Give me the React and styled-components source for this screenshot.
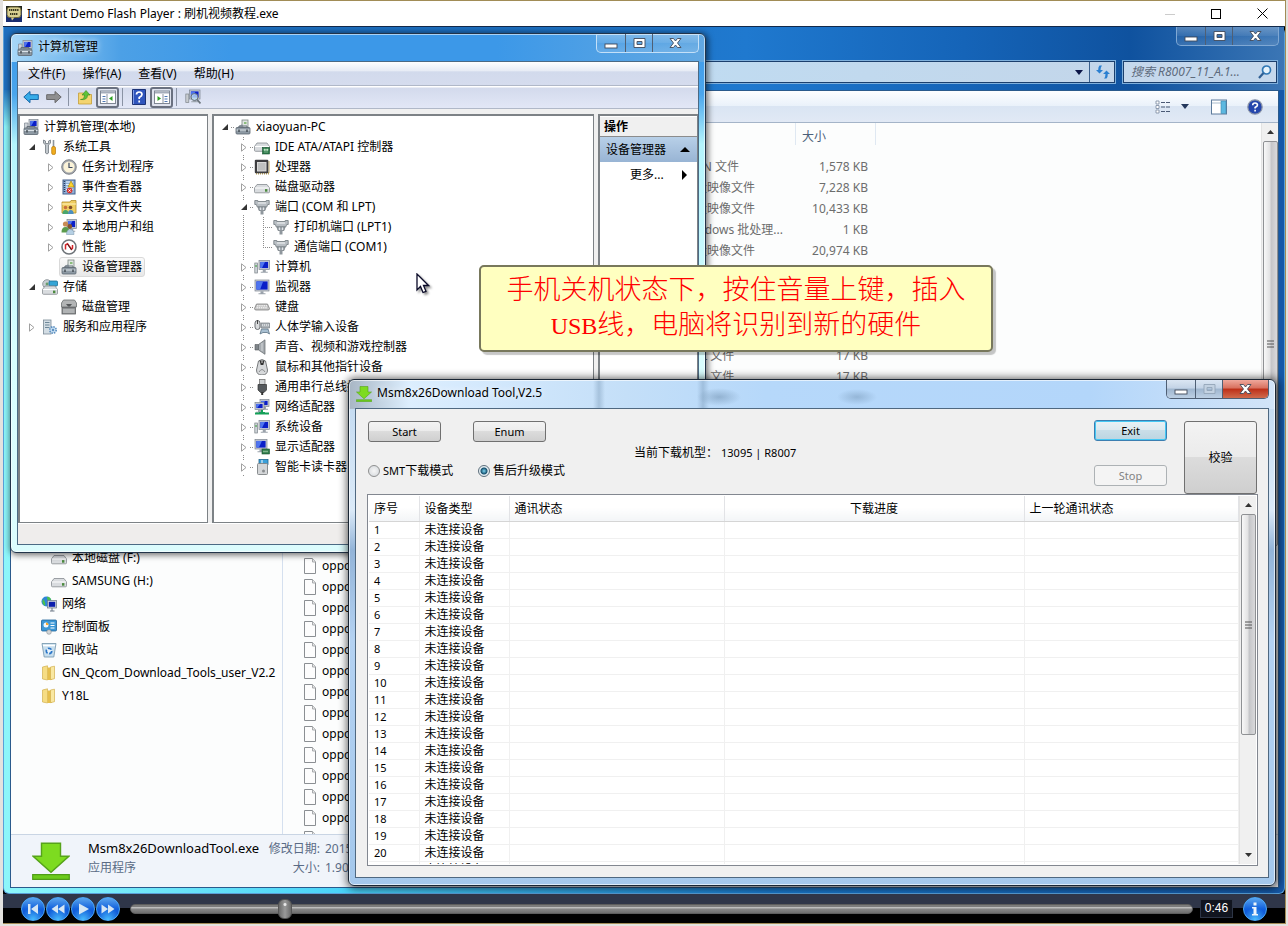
import React from "react";
import styled, { createGlobalStyle, css } from "styled-components";

const Global = createGlobalStyle`
  * { box-sizing: border-box; }
  body { margin: 0; background: #e4e2df; font: 12px/20px "Noto Sans", "Noto Sans CJK SC", sans-serif; color: #000; }
  button, input { font: inherit; margin: 0; }
  ul { list-style: none; margin: 0; padding: 0; }
  svg { display: block; flex: none; }
`;

/* ---------- icons ---------- */

const Screen = ({ x = 5, y = 1, w = 10, h = 8 }) => (
  <g>
    <rect x={x} y={y} width={w} height={h} fill="#c9ced6" stroke="#7d8590" strokeWidth=".7" />
    <rect x={x + 1.4} y={y + 1.4} width={w - 2.8} height={h - 2.8} fill="#0a1fc8" />
    <path d={`M${x + 1.4} ${y + 1.4}h${(w - 2.8) * 0.6}l-3 ${h - 2.8}h-${Math.max(0, (w - 2.8) * 0.6 - 3)}z`} fill="#4d74ef" />
    <path d={`M${x + w / 2 - 1.5} ${y + h + 0.3}h3v2h2v1h-7v-1h2z`} fill="#9aa2ab" />
  </g>
);
const Toolbox = ({ y = 8 }) => (
  <g>
    <path d={`M4 ${y + 2}v-2.5h8V${y + 2}`} fill="none" stroke="#66707a" />
    <rect x="1" y={y + 1} width="14" height="6.5" rx="1" fill="#8e9aa4" stroke="#5b656e" strokeWidth=".8" />
    <path d={`M1.5 ${y + 3.5}h13`} stroke="#dce3e8" />
    <path d={`M4 ${y + 3}v2.4M12 ${y + 3}v2.4`} stroke="#3f484f" strokeWidth="1.4" />
  </g>
);
const Drive = ({ y = 7 }) => (
  <g>
    <path d={`M3 ${y}h10l2.5 3.5v3.8q0 1-1 1h-13q-1 0-1-1v-3.8z`} fill="#d9dcdf" stroke="#868b90" strokeWidth=".8" />
    <path d={`M1 ${y + 3.5}h14`} stroke="#fff" />
    <rect x="11" y={y + 4.6} width="2.4" height="2.6" fill="#4c8a3f" />
  </g>
);

const Icons = {
  manager: <g><Screen x={6} y={0.5} w={9} h={8} /><path d="M1.5 4h3.5v7h-3.5z" fill="#cfd4d9" stroke="#7d8590" strokeWidth=".7" /><Toolbox y={8} /></g>,
  tools: <g><path d="M1.500 1v3l2 2v8q1.500 2 3 0V6l2-2V1l-2 1v2.500h-3V2z" fill="#c3c9ce" stroke="#717980" strokeWidth=".8" /><path d="M11.500 1v7" stroke="#8d959b" strokeWidth="1.600" /><rect x="9.700" y="7.500" width="3.800" height="8" rx="1.500" fill="#f0ac1e" stroke="#b87a08" strokeWidth=".7" /></g>,
  clock: <g><circle cx="8" cy="8" r="7.300" fill="#a4a8ae" stroke="#6d7176" strokeWidth=".8" /><circle cx="8" cy="8" r="5.600" fill="#fbf3d8" /><path d="M8 3.800V8.500h3.500" fill="none" stroke="#3c4a63" strokeWidth="1.200" /></g>,
  event: <g><rect x="2" y="1" width="12" height="14" fill="#8fb0d8" stroke="#46618c" /><path d="M5 3h7M5 5.500h7M5 8h7M5 10.500h7" stroke="#e8f1fb" /><path d="M3.500 2v12" stroke="#2c3e5e" strokeDasharray="1 1" strokeWidth="1.500" /><path d="M10 2l3.200 6H7z" fill="#ffd42e" stroke="#a37a00" strokeWidth=".6" /><circle cx="8.600" cy="11.500" r="2.800" fill="#d8322c" /><path d="M7.500 10.400l2.200 2.200m0-2.200l-2.200 2.200" stroke="#fff" /></g>,
  share: <g><path d="M1 3h8l1-1.500h5V14H1z" fill="#f0cd60" stroke="#b18e2a" strokeWidth=".8" /><path d="M1 5h14" stroke="#fff3bd" /><circle cx="4.500" cy="8.500" r="1.800" fill="#c8703a" /><circle cx="9.500" cy="8.500" r="1.800" fill="#7a4b2b" /><path d="M1.500 15q0-4 3-4t3 4z" fill="#4aa66e" /><path d="M7 15q0-4 2.800-4t2.800 4z" fill="#4d8fc0" /></g>,
  users: <g><Screen x={6} y={0.500} w={9.500} h={9} /><circle cx="4.500" cy="5" r="2.600" fill="#c88b55" /><circle cx="8.800" cy="7.500" r="2.400" fill="#83552f" /><path d="M.5 13.500q0-5.500 4-5.500t4 5.500z" fill="#5b9b4c" /><path d="M5.500 15.500q0-5 3.800-5t3.700 5z" fill="#b6d0e4" stroke="#7695ad" strokeWidth=".5" /></g>,
  perf: <g><circle cx="8" cy="8" r="7" fill="#fff" stroke="#70757a" strokeWidth="1.600" /><path d="M4.500 10.500V6l2-1.200 4 5.500 1-1V6" fill="none" stroke="#d3262a" strokeWidth="1.500" /><path d="M6.500 5l4 6" stroke="#222" strokeWidth=".8" /></g>,
  device: <g><rect x="7" y="1" width="6" height="8" fill="#dfe6e2" stroke="#7c8682" strokeWidth=".8" /><path d="M9 3h2.500v2H9z" fill="#8bbd7c" /><path d="M3 8l4-3 2 4z" fill="#98a3ac" /><Toolbox y={7.500} /></g>,
  storage: <g><circle cx="5" cy="5" r="4.300" fill="#c9cfd4" stroke="#7e868c" strokeWidth=".8" /><circle cx="5" cy="5" r="1.400" fill="#6b9e6d" /><rect x="7" y="2" width="8.500" height="5" rx="1" fill="#35a5d6" stroke="#1d6f95" strokeWidth=".8" /><Drive y={7} /></g>,
  diskmgmt: <g><path d="M2.500 1h11l2 3v4h-15v-4z" fill="#b3b5b6" stroke="#6b6e70" strokeWidth=".8" /><path d="M5 5h6l-2 2.500H7z" fill="#55585a" /><rect x="1" y="8.500" width="13.500" height="6.500" fill="#8c8f91" stroke="#5c5f61" strokeWidth=".8" /><path d="M2 11h11.500M2 13h11.500" stroke="#d5d7d8" /></g>,
  services: <g><rect x="1.500" y="1" width="7.500" height="14" fill="#d3dde4" stroke="#7b8a96" strokeWidth=".8" /><path d="M3 3.500h4.500M3 6h4.500M3 8.500h4.500" stroke="#6d8798" /><circle cx="11" cy="11" r="3.200" fill="#c7dff2" stroke="#5c8fc0" strokeWidth="1.600" strokeDasharray="1.500 1" /><circle cx="11" cy="11" r="1.200" fill="#5c8fc0" /></g>,
  ide: <g><Drive y={4} /><rect x="8.500" y="8.500" width="7" height="6.500" fill="#2e7b4a" stroke="#175330" strokeWidth=".6" /><path d="M10 10h1.500v1.500H10zM12.500 10H14v1.500h-1.500zM10 13h4" fill="#bfe3c4" stroke="#bfe3c4" strokeWidth=".5" /></g>,
  cpu: <g><path d="M2 14.500h13V2" fill="none" stroke="#b49b55" strokeWidth="1.800" strokeDasharray="1 1" /><rect x=".8" y=".8" width="13.500" height="13.500" rx="1" fill="#3d3d40" /><rect x="3.500" y="3.500" width="8.500" height="8.500" fill="#bfc0c0" stroke="#dadada" /></g>,
  disk: <Drive y={5.500} />,
  port: <g><path d="M.8 1.500h3v1h8.400v-1h3v4h-1.500l-1 2.500H3.300l-1-2.500H.8z" fill="#b9bfc4" stroke="#70787e" strokeWidth=".8" /><path d="M4 4h8" stroke="#f4f6f7" /><path d="M4 8h8l-1 3.500H5z" fill="#a2a9af" stroke="#70787e" strokeWidth=".7" /><path d="M6.500 8.500v2.500M9.500 8.500v2.500" stroke="#e2e6e9" /><path d="M6.500 11.500h3v4h-3z" fill="#8f979d" /></g>,
  computer: <g><Screen x={5} y={1.500} w={10.500} h={9} /><rect x=".8" y="4" width="2.800" height="10" fill="#cdd2d6" stroke="#7c848a" strokeWidth=".7" /><path d="M1.300 7h1.500" stroke="#43a443" strokeWidth="1.500" /></g>,
  monitor: <Screen x={1} y={1} w={14} h={11} />,
  keyboard: <g><path d="M2.500 5h11l2 4.500q0 1.500-1.500 1.500H2Q.5 11 .5 9.500z" fill="#c4c4c4" stroke="#808080" strokeWidth=".8" /><path d="M3 6.800h10M2.500 8.800h11" stroke="#fff" strokeDasharray="1.400 .8" /></g>,
  hid: <g><rect x="1" y="1.500" width="5" height="9" rx="2.500" fill="#d8dadc" stroke="#6a6e72" /><path d="M3.500 1v4" stroke="#444" /><path d="M7 4h8.500v5H7z" fill="#aeb4b9" stroke="#767d83" strokeWidth=".7" /><path d="M8 6h7" stroke="#fff" strokeDasharray="1 1" /><path d="M6 15l1.500-5h6.500l1.500 5-2.500-1.500H9z" fill="#a9c0d2" stroke="#5d7385" strokeWidth=".8" /></g>,
  sound: <g><path d="M1 5.500h3.500V11H1z" fill="#7f858a" stroke="#55595c" strokeWidth=".6" /><path d="M4.500 5.500L11 .8v14.500L4.500 11z" fill="#a6abb0" stroke="#5f6468" strokeWidth=".7" /><path d="M8 4v8" stroke="#d4d8da" /></g>,
  mouse: <g><path d="M4.500 2q3.500-3 7 0l2 9q0 5-5.500 5t-5.500-5z" fill="#d7d9db" stroke="#6b6e70" strokeWidth=".9" /><path d="M5.500 1.500l1.200 4.500h2.600l1.200-4.500z" fill="#333" /><path d="M8 1.500v2.500" stroke="#ddd" /><path d="M5 13q3-5 6 0" fill="none" stroke="#8b8e90" /></g>,
  usb: <g><rect x="5.500" y=".5" width="5.500" height="5" fill="#d0d3d5" stroke="#777" strokeWidth=".8" /><path d="M4 5.500h8.500V11l-2.500 2.500h-3.500L4 11z" fill="#55595d" stroke="#333" strokeWidth=".7" /><path d="M8.200 13v3" stroke="#333" strokeWidth="2" /></g>,
  netadapter: <g><Screen x={6} y={0.500} w={9} h={7} /><Screen x={1} y={3.500} w={9} h={7} /><path d="M1 14.500h14M5 14h6M8 11v3" stroke="#14a058" strokeWidth="2" /></g>,
  display: <g><Screen x={1} y={0.500} w={12} h={9.500} /><rect x="8" y="10" width="7.500" height="5" fill="#2e7b4a" stroke="#174f2e" strokeWidth=".6" /><path d="M9.500 12.500h4.500" stroke="#cfeccf" strokeDasharray="1 1" strokeWidth="1.500" /></g>,
  smartcard: <g><rect x="5" y=".5" width="9" height="5" fill="#3ba0da" stroke="#20648c" strokeWidth=".8" /><path d="M8 1v4" stroke="#fff" /><rect x="3.500" y="4.500" width="10" height="11" rx="1" fill="#d4d6d8" stroke="#7e8285" strokeWidth=".9" /><circle cx="9.500" cy="12" r="1.500" fill="#8a8d90" /></g>,
  network: <g><circle cx="5.500" cy="5.500" r="5" fill="#2f86d8" /><path d="M2 3q3 3 2 7Q0 7 2 3zM6 .8q4 0 4 3.500L6.500 4z" fill="#4cc14d" /><rect x="6.500" y="4.500" width="9" height="7.500" fill="#d3d7dc" stroke="#6a7785" strokeWidth=".7" /><rect x="7.800" y="5.800" width="6.400" height="5" fill="#0d1fae" /><path d="M11 12v3M9 15h4.500" stroke="#6a7785" /></g>,
  control: <g><rect x=".5" y="1" width="15" height="11" rx="1" fill="#3b97d6" stroke="#1f6298" strokeWidth=".8" /><circle cx="5" cy="6" r="2.500" fill="#f1f7fb" /><path d="M5 6V3.500A2.500 2.500 0 0 1 7.500 6z" fill="#f5a52a" /><path d="M9.500 4h4M9.500 6.500h4M9.500 9h4" stroke="#fff" /><circle cx="8" cy="13" r="2.300" fill="#d3d7d9" stroke="#878c90" strokeWidth=".6" /></g>,
  recycle: <g><path d="M1 1.500h14L12.800 15H3.200z" fill="#c8dfee" stroke="#7e9db2" strokeWidth=".9" /><path d="M2 3.500h12" stroke="#fff" strokeWidth="1.500" /><circle cx="8" cy="9" r="2.700" fill="#eaf4fb" stroke="#2c77c8" strokeWidth="1.700" strokeDasharray="4 1.600" /></g>,
  folder: <g><path d="M1.500 2l5-1.200V15l-5-1z" fill="#f6dd84" stroke="#d2b04f" strokeWidth=".7" /><path d="M6.500 2.500H11V15H6.500z" fill="#e6bf4c" /><path d="M9.500 2l4-.8v12.500l-4 1z" fill="#f9e8a2" stroke="#d2b04f" strokeWidth=".7" /></g>,
  file: <g><path d="M2.500.5h8l3 3.500v11.500h-11z" fill="#fdfdfd" stroke="#8b8f93" /><path d="M10.500.5v3.500h3" fill="#e6e6e6" stroke="#a8abad" /></g>,
  download: <g><path d="M4 .5h8v5.500h3.500L8 12.800.5 6H4z" fill="#7ddb20" stroke="#56a31a" strokeWidth=".6" /><path d="M.3 13.700h15.400v2H.3z" fill="#6ccb1c" stroke="#4f9c17" strokeWidth=".5" /></g>,
  back: <path d="M.8 8L7 2.500V5.700h8.300v4.800H7v3.200z" fill="#37ace8" stroke="#1767a8" />,
  forward: <path d="M15.200 8L9 2.500V5.700H.7v4.800H9v3.200z" fill="#8f8f90" stroke="#69696b" />,
  up: <g><path d="M1.500 4h5l1 1.500h7V15h-13z" fill="#f3d470" stroke="#c49e38" strokeWidth=".8" /><path d="M3.500 10.500q4 0 4-4.500H5L9 1.500 13 6h-2.500q0 5.500-7 4.500z" fill="#5fc239" stroke="#338a1a" strokeWidth=".6" /></g>,
  paneLeft: <g><rect x=".5" y="2" width="15" height="12.500" fill="#fff" stroke="#7f8794" /><path d="M1 3.500h14" stroke="#a5adba" strokeWidth="2" /><path d="M2.500 7.500h3M2.500 10h3M2.500 12.500h3" stroke="#4e78b4" /><path d="M7 5v9" stroke="#8b93a0" /><path d="M12.500 7v5L9 9.500z" fill="#2ca022" /></g>,
  paneRight: <g><rect x=".5" y="2" width="15" height="12.500" fill="#fff" stroke="#7f8794" /><path d="M1 3.500h14" stroke="#a5adba" strokeWidth="2" /><path d="M10.500 7.500h3M10.500 10h3M10.500 12.500h3" stroke="#4e78b4" /><path d="M9 5v9" stroke="#8b93a0" /><path d="M3.500 7v5L7 9.500z" fill="#2ca022" /></g>,
  help: <g><path d="M1.500.5h13v15h-13z" fill="#2f55bd" stroke="#1c3377" /><path d="M2.500 1v14" stroke="#7f9be4" /><path d="M5.500 5.500Q5.500 3 8.200 3T11 5.500Q11 7 8.200 8.500V10M8.200 11.500v2" fill="none" stroke="#fff" strokeWidth="1.700" /></g>,
  scan: <g><rect x=".8" y="5" width="3" height="8.500" fill="#c8ccd0" stroke="#7e858b" strokeWidth=".7" /><Screen x={4.500} y={1} w={10.500} h={9} /><circle cx="9.500" cy="8" r="3.500" fill="#bfe0f5" fillOpacity=".8" stroke="#6a737b" /><path d="M12 10.500l3.500 4" stroke="#6a737b" strokeWidth="1.800" /></g>,
  refresh: <g fill="#2a7fd0"><path d="M4.500 1.500H7Q5.500 3 5.500 6H8L4.500 9.500 1 6h2.200Q3.200 2.500 4.500 1.500z" /><path d="M11.500 14.500H9Q10.500 13 10.500 10H8l3.500-3.500L15 10h-2.200Q12.800 13.500 11.500 14.500z" /></g>,
  search: <g><circle cx="9.500" cy="6" r="4" fill="#e5f2fb" stroke="#2f77b4" strokeWidth="1.700" /><path d="M6.500 9L2 14" stroke="#2f5f94" strokeWidth="2.200" /></g>,
  views: <g><path d="M1 2h3v3H1zM1 6.500h3v3H1zM1 11h3v3H1z" fill="#fff" stroke="#7888a0" strokeWidth=".8" /><path d="M6 3.500h9M6 8h9M6 12.500h9" stroke="#4b5a75" strokeDasharray="4 1" /></g>,
  preview: <g><rect x=".5" y="1" width="15" height="14" fill="#fff" stroke="#5c7b9c" /><path d="M1 4h9" stroke="#a9bccd" /><rect x="10" y="2" width="5" height="12.500" fill="#5cb8e0" stroke="#3c86ad" strokeWidth=".6" /></g>,
  helpRound: <g><circle cx="8" cy="8" r="7.200" fill="#2446ac" stroke="#8a94a8" strokeWidth="1.200" /><path d="M5.700 6.200Q5.700 4 8.100 4t2.400 2.100Q10.500 7.300 8.100 8.500v1M8.100 10.700v1.700" fill="none" stroke="#fff" strokeWidth="1.600" /></g>,
  app: <g><rect width="16" height="16" fill="#182c70" /><path d="M0 0h16v5H0z" fill="#20241c" /><rect x="1" y="1" width="14" height="10.500" rx="3" fill="#d8cf90" stroke="#6d6638" /><path d="M3 4h10M4 8h8" stroke="#3a381f" strokeWidth="2" strokeDasharray="1.300 .6" /><path d="M5 11.500l1 3 2.500-3z" fill="#d8cf90" /></g>,
};
const Icon = ({ name, size = 16 }) => (
  <svg width={size} height={size} viewBox="0 0 16 16" aria-hidden="true">{Icons[name]}</svg>
);

/* ---------- player shell ---------- */

const Page = styled.div`height: 100vh; min-height: 600px; display: flex; padding: 0 2px 2px 3px;`;
const Player = styled.div`
  flex: 1; min-width: 0; display: flex; flex-direction: column; border: 1px solid #a18c56; border-left: 0; background: #000;
`;
const PlayerTitle = styled.header`
  height: 26px; flex: none; display: flex; align-items: center; gap: 5px; padding-left: 3px; background: #fff; border-bottom: 1px solid #12294a;
`;
const PlayerButtons = styled.div`display: flex;`;
const Grow = styled.span`flex: 1; min-width: 0;`;
const PlainButton = styled.button`
  width: 46px; height: 25px; padding: 0; border: 0; background: none; display: grid; place-items: center;
`;
const Stage = styled.main`flex: 1; min-height: 0; position: relative; display: flex; overflow: hidden;`;

const PlayerBar = styled.footer`
  height: 29px; flex: none; display: flex; align-items: center; gap: 1px; padding: 0 18px; background: linear-gradient(#2f3649 50%, #000 50%);
`;
const Round = styled.button`
  width: 24px; height: 24px; padding: 0; border: 1px solid #4aa8f8; border-radius: 50%; display: grid; place-items: center;
  background: radial-gradient(circle at 50% 100%, #49c0ff, transparent 50%), linear-gradient(#5aa5ee, #1160dc 50%, #0c4cd0);
`;
const Seek = styled.input`
  appearance: none; flex: 1; min-width: 0; height: 20px; margin: 0 6px 0 9px; background: none;
  &::-webkit-slider-runnable-track {
    height: 10px; border-radius: 5px; border: 1px solid #5d5d5d; background: linear-gradient(#7c7c7c 20%, #c0c0c0 30%, #858585 55%, #6d6d6d);
  }
  &::-webkit-slider-thumb {
    appearance: none; width: 14px; height: 20px; margin-top: -6px; border-radius: 6px; border: 1px solid #555;
    background: radial-gradient(circle at 50% 25%, #e8e8e8 1px, transparent 2px), linear-gradient(90deg, #6a6a6a, #999, #6a6a6a);
  }
`;
const Time = styled.output`
  width: 33px; height: 19px; margin-right: 9px; border: 1px solid #2d3546; background: #11151f; color: #fff; text-align: center;
  font: 12px/17px "Liberation Sans", sans-serif;
`;

/* ---------- window parts ---------- */

const CaptionBox = styled.div`
  display: flex; height: 19px; flex: none; border: 1px solid ${(p) => p.$line}; border-top: 0; border-radius: 0 0 5px 5px; overflow: hidden;
`;
const CaptionButton = styled.button`
  width: ${(p) => p.$w}px; padding: 0; border: 0; display: grid; place-items: center;
  background: ${(p) => p.$bg || "linear-gradient(#ffffff40, #ffffff18 50%, #ffffff08 50%, #ffffff20)"};
  & + & { border-left: 1px solid ${(p) => p.$line}; }
`;
const glyphs = {
  min: <rect x="2" y="7" width="12" height="4" />,
  max: <path fillRule="evenodd" d="M3 1.500h11v9H3zM6 4.500v3h5v-3z" />,
  close: <path d="M3 1.500h3.500l2 2.500 2-2.500H14l-3.500 4.500L14 10.500h-3.500l-2-2.500-2 2.500H3L6.500 6z" />,
};
const Captions = ({ line, variant }) => (
  <CaptionBox $line={line}>
    {["min", "max", "close"].map((k, i) => (
      <CaptionButton
        key={k}
        aria-label={k}
        disabled={variant === "dialog" && k === "max"}
        $line={line}
        $w={[28, 27, 46][i]}
        $bg={variant === "dialog" ? (k === "close" ? "linear-gradient(#efa89c, #d8705e 45%, #bd2f18 50%, #d06a4c)" : "linear-gradient(#dbe6f3, #c3d3e6 45%, #9fb6cf 50%, #bdd0e4)") : undefined}
      >
        <svg width="17" height="12" viewBox="0 0 17 12">
          <g fill={variant === "dialog" && k === "max" ? "#c3d2e2" : "#fff"} stroke={variant === "dialog" && k === "max" ? "#93a5b8" : "#414a5a"} strokeWidth=".9">{glyphs[k]}</g>
        </svg>
      </CaptionButton>
    ))}
  </CaptionBox>
);

const Scroll = styled.div`
  width: 17px; flex: none; display: flex; flex-direction: column; align-items: center; background: #f0f0f0; border-left: 1px solid #e3e3e3;
`;
const ScrollArrow = styled.button`
  width: 15px; height: 18px; flex: none; padding: 0; border: 0; background: none; display: grid; place-items: center;
`;
const Thumb = styled.div`
  width: 15px; height: ${(p) => p.$h}px; flex: none; display: grid; place-items: center; border: 1px solid #8f9194; border-radius: 2px;
  background: linear-gradient(90deg, #f8f8f8, #e2e2e3 45%, #c4c5c8 55%, #d9d9db);
`;
const ScrollBar = ({ h }) => (
  <Scroll>
    <ScrollArrow aria-label="up"><svg width="7" height="4"><path d="M3.500 0L7 4H0z" fill="#333" /></svg></ScrollArrow>
    <Thumb $h={h}><svg width="7" height="8"><path d="M0 1h7M0 4h7M0 7h7" stroke="#555" /></svg></Thumb>
    <Grow />
    <ScrollArrow aria-label="down"><svg width="7" height="4"><path d="M3.500 4L7 0H0z" fill="#333" /></svg></ScrollArrow>
  </Scroll>
);

/* ---------- explorer ---------- */

const Explorer = styled.section`
  flex: 1; min-width: 0; display: flex; flex-direction: column; padding: 0 5px 5px 6px; border: 1px solid #5aa0d8; border-top: 0; border-radius: 0 6px 6px 6px;
  background:
    linear-gradient(90deg, transparent 10px, transparent calc(100% - 10px), #1559a8 calc(100% - 7px)),
    linear-gradient(#1c6fc0 0, #1c6fc0 60px, transparent 100px),
    linear-gradient(90deg, #8df6fa, #48d2f8 27%, #1a7bd0 60%, #1559a8);
`;
const ExplorerHead = styled.div`
  margin: 0 -5px 0 -6px; padding: 0 5px 6px 6px; background: linear-gradient(90deg, #1d6fc0 40%, #1f79cf 58%, #1564b8 75%, #0f529f 88%, #3b76b5);
`;
const ExplorerTitle = styled.div`height: 33px; display: flex; justify-content: flex-end;`;
const AddressRow = styled.div`height: 24px; display: flex; gap: 6px; justify-content: flex-end; padding-right: 1px;`;
const fieldBox = css`height: 24px; display: flex; align-items: center; border: 1px solid #7fb0dc; outline: 1px solid #1b3f6d; outline-offset: -2px; background: #c5d8ec;`;
const Address = styled.div`${fieldBox} flex: 1; background: linear-gradient(90deg, #bfdcf2 55%, #c3d6ea);`;
const IconButton = styled.button`
  width: ${(p) => p.$w || 26}px; height: 22px; padding: 0; border: 0; background: none; display: grid; place-items: center;
  ${(p) => p.$line && "border-left: 1px solid #3a5f8c;"}
`;
const SearchField = styled.label`${fieldBox} width: 156px; padding: 0 4px 0 8px;`;
const SearchInput = styled.input`
  flex: 1; min-width: 0; padding: 0; border: 0; background: none; font-style: italic; &::placeholder { color: #5e6b7c; opacity: 1; }
`;
const ExplorerClient = styled.div`flex: 1; min-height: 0; display: flex; flex-direction: column; border: 1px solid #2a5a8c; background: #fcfdfd;`;
const ExplorerTools = styled.div`
  height: 32px; flex: none; display: flex; align-items: center; justify-content: flex-end; padding-right: 10px;
  background: linear-gradient(#fdfeff, #e9f1fa 50%, #dae5f3 50%, #e1e9f5); border-bottom: 1px solid #a4b4c8;
`;
const ExplorerBody = styled.div`flex: 1; min-height: 0; display: flex;`;
const Nav = styled.nav`width: 272px; flex: none; padding-top: 423px; border-right: 1px solid #d5e0ef; overflow: hidden;`;
const NavLink = styled.a`
  height: 23px; display: flex; align-items: center; gap: 5px; padding-left: ${(p) => (p.$deep ? 40 : 30)}px; color: #000; text-decoration: none; white-space: nowrap;
`;
const Files = styled.div`flex: 1; min-width: 0; overflow: hidden;`;
const FileTable = styled.table`width: 593px; table-layout: fixed; border-collapse: collapse; line-height: 20px; white-space: nowrap;`;
const FileHead = styled.th`
  width: ${(p) => p.$w}px; height: 33px; padding: 4px 6px; vertical-align: top; text-align: left; font-weight: 400; color: #4c607a;
  background: linear-gradient(#dfe8f2, #dfe8f2) right top / 1px 22px no-repeat;
`;
const FileCell = styled.td`
  height: 21px; padding: 0 8px 0 ${(p) => p.$pad || 0}px; color: #6d6d6d; text-align: ${(p) => (p.$right ? "right" : "left")}; overflow: hidden;
`;
const FileName = styled.span`display: flex; align-items: center; gap: 4px; color: #000;`;
const Details = styled.div`
  height: 53px; flex: none; display: flex; padding: 4px 0 0 21px; gap: 18px; border-top: 1px solid #c9d5e4; background: #f0f4fa; color: #5a6b85; line-height: 19px; white-space: nowrap;
`;
const DetailIcon = styled.span`padding-top: 3px;`;
const DetailGrid = styled.dl`
  margin: 0; display: grid; grid-template-columns: 174px 53px auto; column-gap: 5px; align-content: start;
  dt { text-align: right; } dd { margin: 0; }
`;
const DetailTitle = styled.dd`color: #000; font-size: 13px;`;

const rowTypes = [["BIN 文件", "1,578 KB"], ["光盘映像文件", "7,228 KB"], ["光盘映像文件", "10,433 KB"], ["Windows 批处理...", "1 KB"], ["光盘映像文件", "20,974 KB"]];
const fileRows = Array.from({ length: 33 }, (_, i) => {
  if (i < 5) return rowTypes[i];
  if (i === 9 || i === 10) return ["XML 文件", "17 KB"];
  return ["", ""];
});

/* ---------- management console ---------- */

const Console = styled.section`
  position: absolute; left: 7px; top: 6px; width: 696px; height: 520px; display: flex; flex-direction: column; padding: 0 6px 7px;
  border: 1px solid #22344a; border-radius: 6px; box-shadow: inset 0 0 0 1px #ffffff90, 1px 1px 6px 1px #00000090;
  background:
    linear-gradient(90deg, #a8d8f8 0, #4ca0e6 110px, #3c98e8 220px, #3c98e8 70%, #62a8e2) top / 100% 28px no-repeat,
    linear-gradient(#3c98e8, #4aa5ec 60px, #b4f4fc 110px, #d8fdfe 60%, #dcfcfd);
`;
const TitleRow = styled.header`height: ${(p) => p.$h}px; flex: none; display: flex; gap: 5px; padding-left: ${(p) => p.$pad || 0}px;`;
const TitleText = styled.h1`margin: 0; flex: 1; font-size: 12px; font-weight: 400; line-height: 26px; text-shadow: 0 0 6px #fff;`;
const TitleIcon = styled.span`padding-top: 6px;`;
const ConsoleClient = styled.div`flex: 1; min-height: 0; display: flex; flex-direction: column; background: #f0f0f0; border: 1px solid #4c6a84;`;
const MenuBar = styled.nav`
  height: 24px; flex: none; display: flex; align-items: center; gap: 2px; padding-left: 2px;
  background: linear-gradient(#fff, #e6ebf5 40%, #d2daec 42%, #d5dcee); border-bottom: 1px solid #b0b8c8;
`;
const MenuButton = styled.button`height: 20px; padding: 0 7px 0 8px; border: 0; background: none; line-height: 20px;`;
const ToolStrip = styled.div`
  height: 23px; flex: none; display: flex; align-items: center; padding-left: 1px; background: linear-gradient(#fff 1px, #d3daec 2px, #e2e7f6); border-bottom: 1px solid #b0b8c8;
`;
const ToolButton = styled.button`
  width: 23px; height: 21px; padding: 0; display: grid; place-items: center; border: 1px solid transparent; border-radius: 3px; background: none;
  ${(p) => p.$on && "border: 2px solid #6a7180; background: #dfe3ee;"}
`;
const Separator = styled.i`width: 1px; height: 18px; margin: 0 4px 0 3px; background: #8a93a4;`;
const Panels = styled.div`flex: 1; min-height: 0; display: flex; padding: 5px 0 0; gap: 4px;`;
const Panel = styled.div`
  width: ${(p) => p.$w}px; ${(p) => p.$grow && "flex: 1;"} min-width: 0; padding-top: 1px; overflow: hidden; background: #fff; border: 1px solid #7d8286; border-width: 2px 1px 1px 2px;
`;
const StatusBar = styled.div`height: 21px; flex: none; background: #efedec; border-top: 1px solid #fff;`;

const dots = "repeating-linear-gradient(#8c8c8c 0 1px, transparent 1px 2px)";
const TreeList = styled.ul`
  ${(p) => p.$line && css`background: ${dots} ${p.$line}px 0 / 1px ${p.$stop || "100%"} no-repeat;`}
`;
const TreeRow = styled.div`height: 20px; display: flex; align-items: center; padding-left: ${(p) => p.$pad}px; white-space: nowrap;`;
const Expander = styled.button`
  width: 12px; height: 14px; flex: none; padding: 0; border: 0; background: #fff; display: grid; place-items: center;
`;
const Link = styled.i`width: ${(p) => p.$w}px; height: 1px; flex: none; ${(p) => p.$dotted && "background: repeating-linear-gradient(90deg, #8c8c8c 0 1px, transparent 1px 2px);"}`;
const NodeLabel = styled.span`
  display: flex; align-items: center; gap: 5px; height: 20px;
  ${(p) => p.$sel && "margin-left: -2px; padding: 0 2px 0 1px; border: 1px solid #d9d9d9; border-radius: 3px; background: linear-gradient(#fafafa, #e8e8e8);"}
`;
const Node = ({ pad, open, leaf, dotted, linkW = 4, icon, text, sel, children }) => (
  <li>
    <TreeRow $pad={pad}>
      {!leaf && (
        <Expander aria-label={open ? "collapse" : "expand"}>
          <svg width="8" height="9">{open ? <path d="M7 1v6H1z" fill="#333" /> : <path d="M1.500.8v7.400L6 4.500z" fill="#fff" stroke="#a0a0a0" />}</svg>
        </Expander>
      )}
      {linkW > 0 && <Link $w={linkW} $dotted={dotted} />}
      <NodeLabel $sel={sel}><Icon name={icon} />{text}</NodeLabel>
    </TreeRow>
    {children}
  </li>
);

const ActionTitle = styled.h2`margin: 0; height: 20px; padding-left: 4px; font-size: 12px; line-height: 20px; background: #f0f0f0; border-bottom: 1px solid #8c8c8c;`;
const ActionItem = styled.button`
  width: 100%; height: 25px; display: flex; align-items: center; justify-content: space-between; border: 0; padding: 0 7px 0 ${(p) => (p.$head ? 6 : 30)}px;
  background: ${(p) => (p.$head ? "linear-gradient(#b8d0e8, #98b4d4)" : "#fff")};
`;

/* ---------- download tool ---------- */

const Tool = styled.section`
  position: absolute; left: 345px; top: 352px; width: 928px; height: 507px; display: flex; flex-direction: column; padding: 0 6px 7px;
  border: 1px solid #1a2634; border-radius: 6px; box-shadow: inset 0 0 0 1px #ffffffa0, 1px 1px 8px 2px #000000a0;
  background:
    radial-gradient(ellipse 22px 9px at 370px 17px, #5f7f9e70, transparent),
    radial-gradient(ellipse 20px 8px at 508px 17px, #5f7f9e60, transparent),
    linear-gradient(90deg, transparent 244px, #6f8fae60 250px, transparent 256px) top / 100% 29px no-repeat,
    linear-gradient(90deg, transparent 348px, #6f8fae60 354px, transparent 360px) top / 100% 29px no-repeat,
    linear-gradient(90deg, #a8b6c4 0, #dceefe 60px, #d6eafd 110px, #c4dff8 30%, #b6d8fa 45%, #b3d6fa 80%, #d2e4f8) top / 100% 29px no-repeat,
    linear-gradient(#bfd8f0, #dbeaf8 130px, #93b4d8 170px, #b4d2f2 260px, #a4c8ec);
`;
const ToolClient = styled.div`
  flex: 1; min-height: 0; display: flex; flex-direction: column; padding: 0 10px 11px 11px; background: #f0f0f0; border: 1px solid #4f6880;
`;
const Controls = styled.div`display: flex; height: 85px; flex: none; padding: 12px 1px 0;`;
const ButtonGrid = styled.div`width: 266px; display: grid; grid-template-columns: 105px auto; grid-template-rows: 21px 39px; align-content: start;`;
const Push = styled.button`
  width: 73px; height: ${(p) => p.$h || 21}px; padding: 0; border: 1px solid #707070; border-radius: 3px; font-size: 11px; color: #000;
  background: linear-gradient(#f3f3f3, #ebebeb 49%, #dcdcdc 50%, #cfcfcf);
  ${(p) => p.$focus && "border-color: #3c7fb1; box-shadow: inset 0 0 0 1px #45c8f4; background: linear-gradient(#e9f2f6, #dde9ef 49%, #c9dee8 50%, #bcd5e1);"}
  &:disabled { border-color: #adb2b5; background: #f4f4f4; color: #838383; }
`;
const BigPush = styled(Push)`font-size: 12px;`;
const Radio = styled.label`display: flex; align-items: center; gap: 3px; align-self: end; height: 20px; padding-left: ${(p) => p.$pad || 0}px; font-size: 12px; white-space: nowrap;`;
const Small = styled.span`font-size: 11px;`;
const RadioDot = styled.input.attrs({ type: "radio", name: "mode" })`
  appearance: none; width: 12px; height: 12px; border: 1px solid #8e8f8f; border-radius: 50%; background: radial-gradient(#f6f6f6, #d2d6da);
  &:checked { border-color: #5d6f7c; background: radial-gradient(circle, #7fd6f2 0, #16506e 3px, #e6eef2 4px, #e6eef2 5px); }
`;
const Model = styled.p`margin: 0; padding-top: 22px; flex: 1; display: flex; gap: 3px; font-size: 12px; white-space: nowrap;`;
const RightButtons = styled.div`display: flex; flex-direction: column; gap: 24px; margin: -1px 17px 0 0;`;
const ListBox = styled.div`flex: 1; min-height: 0; display: flex; padding: 1px; border: 1px solid #828790; background: #fff; overflow: hidden;`;
const ListView = styled.div`flex: 1; min-width: 0; overflow: hidden;`;
const DeviceTable = styled.table`width: 100%; table-layout: fixed; border-collapse: collapse; font-size: 12px; line-height: 16px; white-space: nowrap;`;
const DeviceHead = styled.th`
  width: ${(p) => p.$w}; height: 25px; padding: 1px 5px 0; text-align: ${(p) => (p.$center ? "center" : "left")}; font-weight: 400;
  border-right: 1px solid #e2e3e6; border-bottom: 1px solid #d5d5d5; background: linear-gradient(#fff 45%, #f3f5f7);
`;
const DeviceCell = styled.td`height: 17px; padding: 0 5px; border-right: 1px solid #f0f0f0; border-bottom: 1px solid #f0f0f0; ${(p) => p.$num && "font-size: 11px;"}`;

/* ---------- overlays ---------- */

const Callout = styled.p`
  position: absolute; left: 476px; top: 238px; width: 514px; height: 87px; margin: 0; padding: 6px 20px 0; text-align: center;
  border: 2px solid #78785c; border-radius: 5px; background: #ffffc0; box-shadow: 3px 3px 1px #00000038;
  color: #f00; font: 300 27px/35px "Liberation Serif", "Noto Sans CJK SC", serif;
`;
const Latin = styled.span`font-size: 24px;`;
const Pointer = styled.svg`position: absolute; left: 413px; top: 246px; filter: drop-shadow(2px 2px 1px #00000070);`;

const down = <svg width="8" height="5"><path d="M0 0h8L4 5z" fill="#0c1648" /></svg>;

const mediaPaths = [
  <path d="M3 3h2.500v10H3zM13 3v10L6 8z" />,
  <path d="M8 3.500v9L1.500 8zM14.500 3.500v9L8 8z" />,
  <path d="M4 2.500v11L14 8z" />,
  <path d="M8 3.500v9L14.500 8zM1.500 3.500v9L8 8z" />,
];

const midNodes = [
  ["ide", "IDE ATA/ATAPI 控制器"], ["cpu", "处理器"], ["disk", "磁盘驱动器"], ["port", "端口 (COM 和 LPT)", true], ["computer", "计算机"], ["monitor", "监视器"],
  ["keyboard", "键盘"], ["hid", "人体学输入设备"], ["sound", "声音、视频和游戏控制器"], ["mouse", "鼠标和其他指针设备"], ["usb", "通用串行总线控制器"],
  ["netadapter", "网络适配器"], ["computer", "系统设备"], ["display", "显示适配器"], ["smartcard", "智能卡读卡器"],
];
const systemTools = [["clock", "任务计划程序"], ["event", "事件查看器"], ["share", "共享文件夹"], ["users", "本地用户和组"], ["perf", "性能"]];

const ExplorerWindow = () => (
  <Explorer>
    <ExplorerHead>
      <ExplorerTitle><Captions line="#7fa8d4" /></ExplorerTitle>
      <AddressRow>
        <Address><Grow /><IconButton $w={20} aria-label="history">{down}</IconButton><IconButton $line aria-label="refresh"><Icon name="refresh" /></IconButton></Address>
        <SearchField><SearchInput aria-label="search" placeholder="搜索 R8007_11_A.1..." /><Icon name="search" /></SearchField>
      </AddressRow>
    </ExplorerHead>
    <ExplorerClient>
      <ExplorerTools>
        <IconButton $w={22} aria-label="views"><Icon name="views" /></IconButton>
        <IconButton $w={22} aria-label="more views"><svg width="8" height="5"><path d="M0 0h8L4 5z" fill="#24385c" /></svg></IconButton>
        <IconButton $w={46} aria-label="preview"><Icon name="preview" /></IconButton>
        <IconButton aria-label="help"><Icon name="helpRound" /></IconButton>
      </ExplorerTools>
      <ExplorerBody>
        <Nav>
          <NavLink href="#f" $deep><Icon name="disk" />本地磁盘 (F:)</NavLink>
          <NavLink href="#h" $deep><Icon name="disk" />SAMSUNG (H:)</NavLink>
          <NavLink href="#net"><Icon name="network" />网络</NavLink>
          <NavLink href="#cp"><Icon name="control" />控制面板</NavLink>
          <NavLink href="#bin"><Icon name="recycle" />回收站</NavLink>
          <NavLink href="#gn"><Icon name="folder" />GN_Qcom_Download_Tools_user_V2.2</NavLink>
          <NavLink href="#y"><Icon name="folder" />Y18L</NavLink>
        </Nav>
        <Files>
          <FileTable>
            <thead><tr><FileHead $w={400} /><FileHead $w={113} /><FileHead $w={80}>大小</FileHead></tr></thead>
            <tbody>
              {fileRows.map(([type, size], i) => (
                <tr key={i}>
                  <FileCell $pad={19}>{i > 18 && <FileName><Icon name="file" />{i < 32 && "oppo"}</FileName>}</FileCell>
                  <FileCell $pad={i === 0 ? 8 : 0}>{type}</FileCell>
                  <FileCell $right>{size}</FileCell>
                </tr>
              ))}
            </tbody>
          </FileTable>
        </Files>
        <ScrollBar h={405} />
      </ExplorerBody>
      <Details>
        <DetailIcon><Icon name="download" size={38} /></DetailIcon>
        <DetailGrid>
          <DetailTitle>Msm8x26DownloadTool.exe</DetailTitle><dt>修改日期:</dt><dd>2015</dd>
          <dd>应用程序</dd><dt>大小:</dt><dd>1.90</dd>
        </DetailGrid>
      </Details>
    </ExplorerClient>
  </Explorer>
);

const ConsoleWindow = () => (
  <Console>
    <TitleRow $h={27}><TitleIcon><Icon name="manager" /></TitleIcon><TitleText>计算机管理</TitleText><Captions line="#c4e0f8" /></TitleRow>
    <ConsoleClient>
      <MenuBar>{["文件(F)", "操作(A)", "查看(V)", "帮助(H)"].map((m) => <MenuButton key={m}>{m}</MenuButton>)}</MenuBar>
      <ToolStrip>
        <ToolButton aria-label="back"><Icon name="back" /></ToolButton>
        <ToolButton aria-label="forward"><Icon name="forward" /></ToolButton>
        <Separator />
        <ToolButton aria-label="up"><Icon name="up" /></ToolButton>
        <ToolButton $on aria-label="tree pane"><Icon name="paneLeft" /></ToolButton>
        <Separator />
        <ToolButton aria-label="help"><Icon name="help" /></ToolButton>
        <ToolButton $on aria-label="action pane"><Icon name="paneRight" /></ToolButton>
        <Separator />
        <ToolButton aria-label="scan"><Icon name="scan" /></ToolButton>
      </ToolStrip>
      <Panels>
        <Panel $w={190}>
          <TreeList>
            <Node pad={3} leaf linkW={0} icon="manager" text="计算机管理(本地)">
              <ul>
                <Node pad={6} open icon="tools" text="系统工具">
                  <ul>
                    {systemTools.map(([icon, text]) => <Node key={text} pad={25} icon={icon} text={text} />)}
                    <Node pad={41} leaf linkW={0} icon="device" text="设备管理器" sel />
                  </ul>
                </Node>
                <Node pad={6} open icon="storage" text="存储"><ul><Node pad={41} leaf linkW={0} icon="diskmgmt" text="磁盘管理" /></ul></Node>
                <Node pad={6} icon="services" text="服务和应用程序" />
              </ul>
            </Node>
          </TreeList>
        </Panel>
        <Panel $grow>
          <TreeList>
            <Node pad={5} open dotted icon="device" text="xiaoyuan-PC">
              <TreeList $line={29} $stop="350px">
                {midNodes.map(([icon, text, open], i) => (
                  <Node key={i} pad={24} dotted open={open} icon={icon} text={text}>
                    {open && (
                      <TreeList $line={49} $stop="30px">
                        <Node pad={49} leaf dotted linkW={10} icon="port" text="打印机端口 (LPT1)" />
                        <Node pad={49} leaf dotted linkW={10} icon="port" text="通信端口 (COM1)" />
                      </TreeList>
                    )}
                  </Node>
                ))}
              </TreeList>
            </Node>
          </TreeList>
        </Panel>
        <Panel $w={100}>
          <ActionTitle>操作</ActionTitle>
          <ActionItem $head>设备管理器<svg width="10" height="5"><path d="M5 0l5 5H0z" /></svg></ActionItem>
          <ActionItem>更多...<svg width="8" height="10"><path d="M0 0l5 5-5 5z" /></svg></ActionItem>
        </Panel>
      </Panels>
      <StatusBar />
    </ConsoleClient>
  </Console>
);

const ToolWindow = () => (
  <Tool>
    <TitleRow $h={28} $pad={1}><TitleIcon><Icon name="download" /></TitleIcon><TitleText>Msm8x26Download Tool,V2.5</TitleText><Captions line="#4f5f74" variant="dialog" /></TitleRow>
    <ToolClient>
      <Controls>
        <ButtonGrid>
          <Push>Start</Push><Push>Enum</Push>
          <Radio><RadioDot /><span><Small>SMT</Small>下载模式</span></Radio>
          <Radio $pad={5}><RadioDot defaultChecked />售后升级模式</Radio>
        </ButtonGrid>
        <Model>当前下载机型： <Small>13095 | R8007</Small></Model>
        <RightButtons><Push $focus>Exit</Push><Push disabled>Stop</Push></RightButtons>
        <BigPush $h={73}>校验</BigPush>
      </Controls>
      <ListBox>
        <ListView>
          <DeviceTable>
            <thead>
              <tr><DeviceHead $w="50px">序号</DeviceHead><DeviceHead $w="90px">设备类型</DeviceHead><DeviceHead $w="215px">通讯状态</DeviceHead><DeviceHead $w="300px" $center>下载进度</DeviceHead><DeviceHead $w="auto">上一轮通讯状态</DeviceHead></tr>
            </thead>
            <tbody>
              {Array.from({ length: 21 }, (_, i) => (
                <tr key={i}><DeviceCell $num>{i + 1}</DeviceCell><DeviceCell>未连接设备</DeviceCell><DeviceCell /><DeviceCell /><DeviceCell /></tr>
              ))}
            </tbody>
          </DeviceTable>
        </ListView>
        <ScrollBar h={221} />
      </ListBox>
    </ToolClient>
  </Tool>
);

export default function App() {
  return (
    <Page>
      <Global />
      <Player>
        <PlayerTitle>
          <Icon name="app" /><span>Instant Demo Flash Player : 刷机视频教程.exe</span><Grow />
          <PlayerButtons>
            <PlainButton aria-label="minimize"><svg width="10" height="10"><path d="M0 5.500h10" stroke="#ccc" /></svg></PlainButton>
            <PlainButton aria-label="maximize"><svg width="12" height="12"><rect x="1.500" y="1.500" width="9" height="9" fill="none" stroke="#000" /></svg></PlainButton>
            <PlainButton aria-label="close"><svg width="11" height="11"><path d="M.5.5l10 10m0-10l-10 10" stroke="#000" /></svg></PlainButton>
          </PlayerButtons>
        </PlayerTitle>
        <Stage>
          <ExplorerWindow />
          <ConsoleWindow />
          <Callout>手机关机状态下，按住音量上键，插入<br /><Latin>USB</Latin>线，电脑将识别到新的硬件</Callout>
          <ToolWindow />
          <Pointer width="14" height="22" viewBox="0 0 14 22"><path d="M1 1v16l3.500-3.500L7 19.500l3-1.200-2.500-5.800H12.500z" fill="#fff" stroke="#0a0a28" strokeWidth="1.300" /></Pointer>
        </Stage>
        <PlayerBar>
          {mediaPaths.map((p, i) => (
            <Round key={i} aria-label={["start", "rewind", "play", "forward"][i]}><svg width="16" height="16" fill="#d5e6f4">{p}</svg></Round>
          ))}
          <Seek type="range" min="0" max="1000" defaultValue="140" aria-label="position" />
          <Time>0:46</Time>
          <Round aria-label="info"><svg width="16" height="16" fill="#eef5fb"><path d="M6.500 1.500h3v3h-3zM5 6h4.500v7H11v1.500H5V13h1.500V7.500H5z" /></svg></Round>
        </PlayerBar>
      </Player>
    </Page>
  );
}
